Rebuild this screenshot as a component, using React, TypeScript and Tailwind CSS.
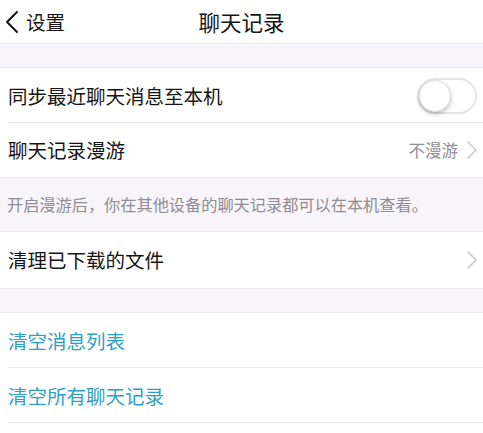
import React from "react";

const font = { fontFamily: '"Noto Sans CJK SC", "Noto Sans", sans-serif' };

function Chevron({ className = "" }: { className?: string }) {
  return (
    <svg width="12" height="20" viewBox="0 0 12 20" className={className}>
      <path d="M2 2 L10 10 L2 18" fill="none" stroke="#c7c7cc" strokeWidth="1.6" strokeLinecap="round" strokeLinejoin="round" />
    </svg>
  );
}

export default function App() {
  return (
    <div className="w-[483px] h-[433px] bg-white overflow-hidden flex flex-col text-[#151515]" style={font}>
      {/* header */}
      <div className="h-[43px] shrink-0 relative flex items-center justify-center bg-white">
        <div className="absolute left-[3px] top-0 h-full flex items-center">
          <svg width="18" height="24" viewBox="0 0 18 24">
            <path d="M14 2 L4 12 L14 22" fill="none" stroke="#151515" strokeWidth="2" strokeLinecap="round" strokeLinejoin="round" />
          </svg>
          <span className="ml-[5px] text-[19.5px] leading-none">设置</span>
        </div>
        <span className="text-[21.5px] leading-none">聊天记录</span>
      </div>
      <div className="h-[25px] shrink-0 bg-[#f7f4fa] border-t border-b border-[#efebf1]" />
      {/* row 1 */}
      <div className="h-[55px] shrink-0 flex items-center justify-between pl-[8px] pr-[6px] relative">
        <span className="text-[19.5px] leading-none">同步最近聊天消息至本机</span>
        <div className="w-[60px] h-[36px] rounded-full border-2 border-[#e6e5e8] bg-white relative">
          <div className="absolute left-0 top-0 w-[32px] h-[32px] rounded-full bg-white shadow-[0_2px_4px_rgba(0,0,0,0.25)] border border-[#dedede]" />
        </div>
        <div className="absolute bottom-0 left-[8px] right-0 h-px bg-[#ebe9ee]" />
      </div>
      {/* row 2 */}
      <div className="h-[54px] shrink-0 flex items-center justify-between pl-[8px] pr-[5px]">
        <span className="text-[19.5px] leading-none">聊天记录漫游</span>
        <div className="flex items-center gap-[8px]">
          <span className="text-[16.5px] leading-none text-[#8e8e93]">不漫游</span>
          <Chevron />
        </div>
      </div>
      {/* note */}
      <div className="h-[55px] shrink-0 bg-[#f7f4fa] border-t border-b border-[#efebf1] flex items-center pl-[7px]">
        <span className="text-[16.2px] leading-none text-[#8f8c94]">开启漫游后，你在其他设备的聊天记录都可以在本机查看。</span>
      </div>
      {/* row 3 */}
      <div className="h-[56px] shrink-0 flex items-center justify-between pl-[8px] pr-[5px]">
        <span className="text-[19.5px] leading-none">清理已下载的文件</span>
        <Chevron />
      </div>
      <div className="h-[25px] shrink-0 bg-[#f7f4fa] border-t border-b border-[#efebf1]" />
      {/* row 4 */}
      <div className="h-[55px] shrink-0 flex items-center pl-[8px] relative">
        <span className="text-[19.5px] leading-none text-[#2f9fc6]">清空消息列表</span>
        <div className="absolute bottom-0 left-[8px] right-0 h-px bg-[#ebe9ee]" />
      </div>
      {/* row 5 */}
      <div className="h-[55px] shrink-0 flex items-center pl-[8px] relative">
        <span className="text-[19.5px] leading-none text-[#2f9fc6]">清空所有聊天记录</span>
        <div className="absolute bottom-0 left-[8px] right-0 h-px bg-[#ebe9ee]" />
      </div>
    </div>
  );
}
